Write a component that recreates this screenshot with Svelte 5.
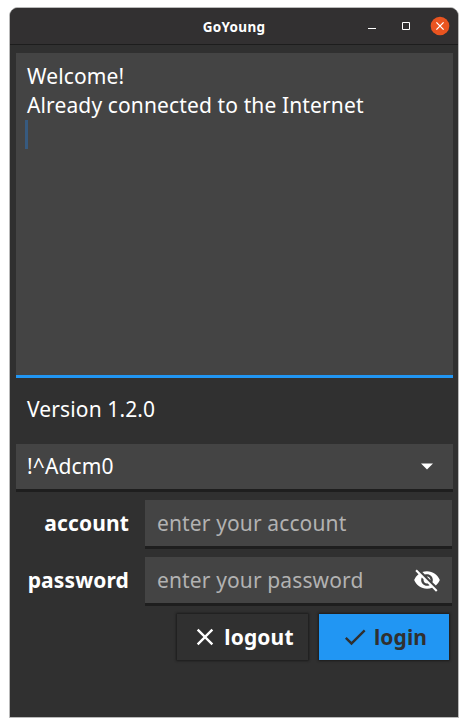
<script>
  const messages = ['Welcome!', 'Already connected to the Internet'];
  let account = $state('');
  let password = $state('');
</script>

<div class="desktop">
  <main class="window">
    <header>
      <h1>GoYoung</h1>
      <div class="controls">
        <svg width="8" height="10" viewBox="0 0 8 10"><path d="M0 7.5h8" stroke="#fff" /></svg>
        <svg width="8" height="8" viewBox="0 0 8 8"><path d="M.5.5h7v7h-7z" fill="none" stroke="#fff" /></svg>
        <svg width="20" height="20" viewBox="0 0 20 20">
          <circle cx="10" cy="10" r="9.3" fill="#e95420" />
          <path d="M6.4 6.4l7.2 7.2M13.6 6.4l-7.2 7.2" stroke="#fff" stroke-width="1.3" />
        </svg>
      </div>
    </header>

    <section class="body">
      <div class="log">
        {#each messages as message}
          <p>{message}</p>
        {/each}
        <div class="caret"></div>
      </div>

      <div class="version">Version 1.2.0</div>

      <div class="select">
        <span>!^Adcm0</span>
        <svg width="12" height="7" viewBox="0 0 12 7"><path d="M0 .4h12l-6 6z" fill="#fff" /></svg>
      </div>

      <label class="row">
        <span class="name">account</span>
        <span class="field"><input type="text" placeholder="enter your account" bind:value={account} /></span>
      </label>
      <label class="row">
        <span class="name">password</span>
        <span class="field">
          <input type="password" placeholder="enter your password" bind:value={password} />
          <svg width="28" height="28" viewBox="0 0 24 24">
            <path fill="#fff" d="M12 7c2.76 0 5 2.24 5 5 0 .65-.13 1.26-.36 1.83l2.92 2.92c1.51-1.26 2.7-2.89 3.43-4.75-1.73-4.39-6-7.5-11-7.5-1.4 0-2.74.25-3.98.7l2.16 2.16C10.74 7.13 11.35 7 12 7zM2 4.27l2.28 2.28.46.46C3.08 8.3 1.78 10.02 1 12c1.73 4.39 6 7.5 11 7.5 1.55 0 3.03-.3 4.38-.84l.42.42L19.73 22 21 20.73 3.27 3 2 4.27zM7.53 9.8l1.55 1.55c-.05.21-.08.43-.08.65 0 1.66 1.34 3 3 3 .22 0 .44-.03.65-.08l1.55 1.55c-.67.33-1.41.53-2.2.53-2.76 0-5-2.24-5-5 0-.79.2-1.53.53-2.2zm4.31-.78l3.15 3.15.02-.16c0-1.66-1.34-3-3-3l-.17.01z" />
          </svg>
        </span>
      </label>

      <div class="actions">
        <button class="logout">
          <svg width="28" height="28" viewBox="0 0 24 24"><path fill="#fff" d="M19 6.41L17.59 5 12 10.59 6.41 5 5 6.41 10.59 12 5 17.59 6.41 19 12 13.41 17.59 19 19 17.59 13.41 12z" /></svg>
          <span>logout</span>
        </button>
        <button class="login">
          <svg width="28" height="28" viewBox="0 0 24 24"><path fill="#303030" d="M9 16.17L4.83 12l-1.42 1.41L9 19 21 7l-1.41-1.41z" /></svg>
          <span>login</span>
        </button>
      </div>
    </section>
  </main>
</div>

<style>
  :global(body) { background: #fff; }
  .desktop {
    box-sizing: border-box;
    width: 468px;
    height: 727px;
    padding: 7px 9px 9px;
    font: 21px/29px 'Noto Sans', sans-serif;
    letter-spacing: 0.125px;
    color: #fff;
  }
  .window {
    box-sizing: border-box;
    width: 450px;
    height: 711px;
    border: 1px solid #b9b9b9;
    border-radius: 9px 9px 0 0;
    background: #303030;
    overflow: hidden;
  }
  header {
    display: grid;
    grid-template-columns: 1fr auto 1fr;
    align-items: center;
    box-sizing: border-box;
    height: 37px;
    background: #323031;
    border-bottom: 1px solid #1d1d1d;
  }
  h1 {
    grid-column: 2;
    margin: 1px 0 0;
    font: bold 13.5px/18px 'Noto Sans', sans-serif;
    letter-spacing: 0.3px;
  }
  .controls {
    display: flex;
    justify-content: flex-end;
    align-items: center;
    padding-right: 8px;
  }
  .controls svg + svg { margin-left: 26px; }
  .controls svg:last-child { margin-left: 20px; }
  svg { display: block; flex: none; }
  .body { padding: 8px 5px 0 6px; }
  .log {
    box-sizing: border-box;
    height: 325px;
    padding: 9px 11px 0;
    background: #444;
    border-bottom: 3px solid #2196f3;
  }
  p { margin: 0; }
  .caret {
    width: 3px;
    height: 29px;
    margin-left: -2px;
    background: #375a7f;
  }
  .version { padding: 17px 11px 20px; }
  .select {
    display: flex;
    align-items: center;
    justify-content: space-between;
    box-sizing: border-box;
    height: 48px;
    padding: 0 20px 0 11px;
    background: #444;
    border-bottom: 3px solid #1e1e1e;
    margin-bottom: 8px;
  }
  .row {
    display: grid;
    grid-template-columns: 113px 307px;
    column-gap: 16px;
    align-items: center;
    height: 49px;
    margin-bottom: 8px;
  }
  .name {
    padding-bottom: 3px;
    font-weight: 700;
    text-align: right;
    white-space: nowrap;
  }
  .field {
    display: flex;
    align-items: center;
    box-sizing: border-box;
    height: 49px;
    padding: 0 11px 0 12px;
    background: #444;
    border-bottom: 3px solid #1e1e1e;
  }
  input {
    flex: 1;
    min-width: 0;
    padding: 0;
    border: 0;
    outline: 0;
    background: none;
    color: #fff;
    font: 21px/29px 'Noto Sans', sans-serif;
    letter-spacing: inherit;
  }
  input::placeholder { color: #b2b2b2; opacity: 1; }
  .actions {
    display: flex;
    justify-content: flex-end;
    gap: 11px;
    padding-right: 4px;
  }
  button {
    display: flex;
    align-items: center;
    justify-content: center;
    gap: 5px;
    height: 46px;
    padding: 0;
    border: 0;
    color: #fff;
    font: bold 21px/29px 'Noto Sans', sans-serif;
    letter-spacing: inherit;
    box-shadow: 0 0 2px 1px #1b1b1b;
  }
  .logout { width: 131px; background: #303030; }
  .login { width: 130px; background: #2196f3; color: #303030; }
</style>
